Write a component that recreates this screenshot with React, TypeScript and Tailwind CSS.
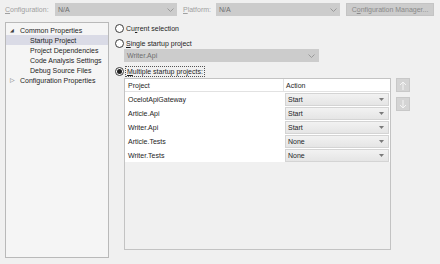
import React from 'react';

const font = { fontFamily: '"Segoe UI", "Liberation Sans", Arial, sans-serif' };

const Chevron: React.FC<{ className?: string }> = ({ className }) => (
  <svg className={className} width="7" height="4" viewBox="0 0 7 4" fill="none" stroke="currentColor" strokeWidth={1}>
    <path d="M0.5 0.5 L3.5 3.5 L6.5 0.5" />
  </svg>
);

const Radio: React.FC<{ checked?: boolean }> = ({ checked }) => (
  <span className="w-[9px] h-[9px] rounded-full border border-[#3c3c3c] bg-white flex items-center justify-center shrink-0">
    {checked && <span className="w-[5px] h-[5px] rounded-full bg-[#222]" />}
  </span>
);

const rows = [
  { name: 'OcelotApiGateway', action: 'Start' },
  { name: 'Article.Api', action: 'Start' },
  { name: 'Writer.Api', action: 'Start' },
  { name: 'Article.Tests', action: 'None' },
  { name: 'Writer.Tests', action: 'None' },
];

export default function App() {
  return (
    <div className="w-[440px] h-[264px] bg-[#f0f0f0] text-[7px] text-[#1e1e1e] overflow-hidden leading-none whitespace-nowrap" style={font}>
      {/* top bar */}
      <div className="flex items-center h-[13px] mt-[3px] pl-[5px]">
        <span className="w-[50px] text-[#a0a0a0]"><u>C</u>onfiguration:</span>
        <div className="w-[122px] h-[13px] bg-[#cccccc] flex items-center justify-between pl-[3px] pr-[3px] text-[#6e6e6e]">
          <span>N/A</span>
          <Chevron className="text-[#9a9a9a]" />
        </div>
        <span className="ml-[6px] w-[33px] text-[#a0a0a0]"><u>P</u>latform:</span>
        <div className="w-[124px] h-[13px] bg-[#cccccc] flex items-center justify-between pl-[3px] pr-[3px] text-[#6e6e6e]">
          <span>N/A</span>
          <Chevron className="text-[#9a9a9a]" />
        </div>
        <div className="ml-[6px] w-[88px] h-[13px] bg-[#cccccc] border border-[#c4c4c4] flex items-center justify-center text-[#8a8a8a]">
          C<u>o</u>nfiguration Manager...
        </div>
      </div>

      <div className="flex mt-[6px] pl-[5px]">
        {/* tree */}
        <div className="w-[104px] h-[236px] border border-[#b9b9b9] bg-[#f5f5f5] pt-[2px] flex flex-col">
          <div className="h-[10px] flex items-center">
            <span className="w-[14px] pl-[4px] text-[5px] text-[#404040]">◢</span>
            <span>Common Properties</span>
          </div>
          <div className="h-[10px] flex items-center bg-[#dadbe6] pl-[24px]">Startup Project</div>
          <div className="h-[10px] flex items-center pl-[24px]">Project Dependencies</div>
          <div className="h-[10px] flex items-center pl-[24px]">Code Analysis Settings</div>
          <div className="h-[10px] flex items-center pl-[24px]">Debug Source Files</div>
          <div className="h-[10px] flex items-center">
            <span className="w-[14px] pl-[4px] text-[6px] text-[#6a6a6a]">▷</span>
            <span>Configuration Properties</span>
          </div>
        </div>

        {/* right side */}
        <div className="flex-1 pl-[6px] pt-[1px]">
          <div className="flex items-center gap-[1px] h-[11px]">
            <Radio />
            <span className="pl-[1px]">Cu<u>r</u>rent selection</span>
          </div>
          <div className="flex items-center gap-[1px] h-[11px] mt-[4px]">
            <Radio />
            <span className="pl-[1px]"><u>S</u>ingle startup project</span>
          </div>
          <div className="ml-[9px] w-[195px] h-[13px] bg-[#cccccc] flex items-center justify-between pl-[3px] pr-[4px] text-[#6e6e6e]">
            <span>Writer.Api</span>
            <Chevron className="text-[#9a9a9a]" />
          </div>
          <div className="flex items-center gap-[1px] h-[11px] mt-[4px]">
            <Radio checked />
            <span className="pl-[1px] pr-[1px] py-[1px] border border-dotted border-[#555]"><u>M</u>ultiple startup projects:</span>
          </div>

          <div className="flex mt-[1px] ml-[9px]">
            <div className="w-[267px] h-[172px] border border-[#c3c3c3] bg-[#f0f0f0] flex flex-col">
              <div className="flex h-[13px] bg-white border-b border-[#e2e2e2]">
                <div className="w-[159px] pl-[3px] flex items-center border-r border-[#e2e2e2]">Project</div>
                <div className="flex-1 pl-[2px] flex items-center">Action</div>
              </div>
              {rows.map(r => (
                <div key={r.name} className="flex h-[14px] bg-white">
                  <div className="w-[159px] pl-[3px] flex items-center">{r.name}</div>
                  <div className="flex-1 flex items-center">
                    <div className="w-[104px] h-[13px] ml-[1px] border border-[#d4d4d4] bg-gradient-to-b from-[#f2f2f2] to-[#e5e5e5] flex items-center justify-between pl-[2px] pr-[4px]">
                      <span>{r.action}</span>
                      <svg width="5" height="3" viewBox="0 0 5 3"><path d="M0 0 L5 0 L2.5 3 Z" fill="#7a7a7a" /></svg>
                    </div>
                  </div>
                </div>
              ))}
            </div>
            <div className="ml-[5px] flex flex-col gap-[5px]">
              <div className="w-[14px] h-[14px] bg-[#d4d4d4] border border-[#c8c8c8] flex items-center justify-center">
                <svg width="8" height="9" viewBox="0 0 8 9" fill="none" stroke="#f4f4f4" strokeWidth={1}>
                  <path d="M4 1 V9 M1 4 L4 1 L7 4" />
                </svg>
              </div>
              <div className="w-[14px] h-[14px] bg-[#d4d4d4] border border-[#c8c8c8] flex items-center justify-center">
                <svg width="8" height="9" viewBox="0 0 8 9" fill="none" stroke="#f4f4f4" strokeWidth={1}>
                  <path d="M4 0 V8 M1 5 L4 8 L7 5" />
                </svg>
              </div>
            </div>
          </div>
        </div>
      </div>
    </div>
  );
}
